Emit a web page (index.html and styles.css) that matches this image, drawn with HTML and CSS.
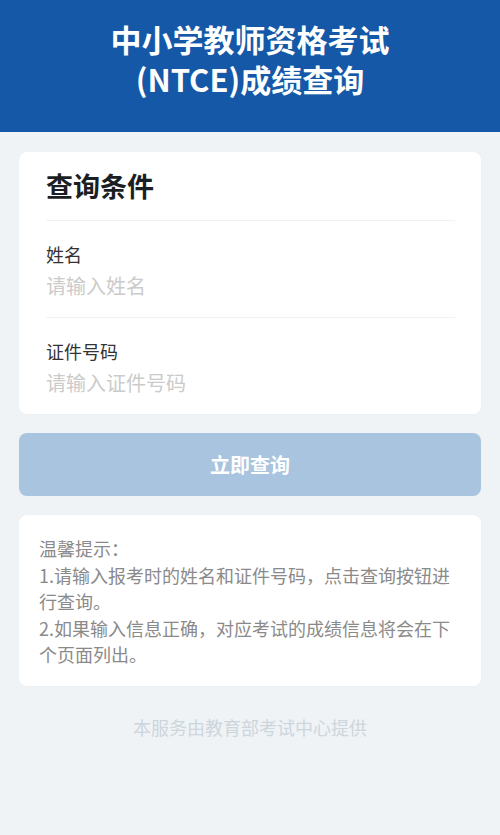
FILE: index.html
```html
<!DOCTYPE html>
<html lang="zh-CN">
<head>
<meta charset="utf-8">
<title>中小学教师资格考试(NTCE)成绩查询</title>
<link rel="stylesheet" href="styles.css">
</head>
<body>
<header class="header">
  <h1 class="title"><span class="title-line">中小学教师资格考试</span><span class="title-line">(NTCE)成绩查询</span></h1>
</header>
<main class="main">
  <section class="card form-card">
    <h2 class="card-title">查询条件</h2>
    <div class="field">
      <label class="label" for="name">姓名</label>
      <input class="input" id="name" type="text" placeholder="请输入姓名">
    </div>
    <div class="field">
      <label class="label" for="idno">证件号码</label>
      <input class="input" id="idno" type="text" placeholder="请输入证件号码">
    </div>
  </section>
  <button class="submit" type="button">立即查询</button>
  <section class="card tips">
    <p>温馨提示：</p>
    <p>1.请输入报考时的姓名和证件号码，点击查询按钮进行查询。</p>
    <p>2.如果输入信息正确，对应考试的成绩信息将会在下个页面列出。</p>
  </section>
  <footer class="footer">本服务由教育部考试中心提供</footer>
</main>
</body>
</html>
```
FILE: styles.css
```css
* { box-sizing: border-box; }
html, body { margin: 0; padding: 0; }
body {
  background: #eff3f6;
  font-family: "Noto Sans CJK SC", "Noto Sans", sans-serif;
  min-height: 835px;
}
.header {
  background: #1458a7;
  height: 132px;
  padding-top: 19px;
}
.title {
  margin: 0;
  display: flex;
  flex-direction: column;
  align-items: center;
  color: #fff;
  font-size: 31px;
  font-weight: 700;
  text-align: center;
}
.title-line {
  display: block;
  height: 40px;
  line-height: 40px;
}
.main {
  padding: 20px 19px 0;
}
.card {
  background: #fff;
  border-radius: 8px;
  box-shadow: 0 0 2px rgba(0, 0, 0, 0.04);
}
.form-card {
  padding: 0 26px 0 27px;
}
.card-title {
  margin: 0;
  padding: 16px 0 16px;
  font-size: 27px;
  line-height: 36px;
  font-weight: 700;
  color: #1b1f24;
  border-bottom: 1px solid #f0f1f3;
}
.field {
  display: flex;
  flex-direction: column;
  gap: 8px;
  padding: 21px 0 19px;
}
.field + .field { border-top: 1px solid #f0f1f3; }
.label {
  font-size: 18px;
  line-height: 24px;
  color: #333;
}
.input {
  border: none;
  outline: none;
  padding: 0;
  margin: 0;
  font-family: inherit;
  font-size: 20px;
  line-height: 24px;
  height: 24px;
  color: #333;
  background: transparent;
}
.input::placeholder { color: #cbcbcb; }
.submit {
  display: block;
  width: 100%;
  height: 63px;
  margin-top: 19px;
  border: none;
  border-radius: 8px;
  background: #a9c4de;
  color: #fff;
  font-family: inherit;
  font-size: 20px;
  font-weight: 700;
}
.tips {
  margin-top: 19px;
  padding: 20px 20px 18px;
  color: #8a8a8a;
  font-size: 18px;
  line-height: 26.5px;
}
.tips p { margin: 0; }
.footer {
  margin-top: 28px;
  text-align: center;
  color: #cdd6dc;
  font-size: 18px;
  line-height: 26px;
}
```
